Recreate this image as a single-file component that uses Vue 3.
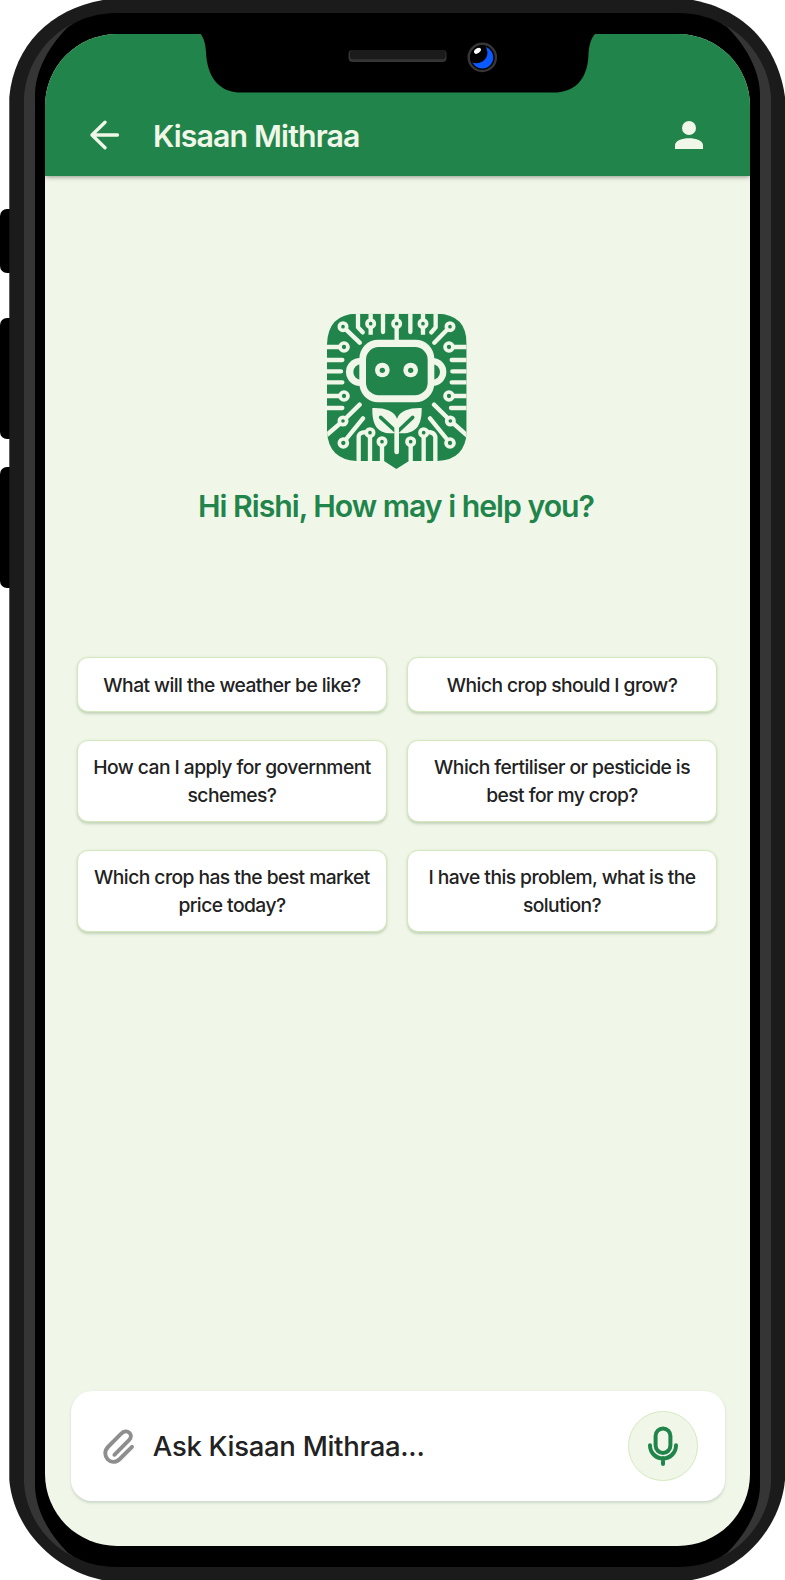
<script setup>
const questions = [
  'What will the weather be like?',
  'Which crop should I grow?',
  'How can I apply for government schemes?',
  'Which fertiliser or pesticide is best for my crop?',
  'Which crop has the best market price today?',
  'I have this problem, what is the solution?',
]
</script>

<template>
  <div class="stage">
    <!-- device body and side buttons -->
    <svg class="overlay" width="785" height="1580" viewBox="0 0 785 1580" aria-hidden="true">
      <rect x="0" y="209" width="24" height="64" rx="7" fill="#000" />
      <rect x="0" y="318" width="24" height="121" rx="7" fill="#000" />
      <rect x="0" y="467" width="24" height="121" rx="7" fill="#000" />
      <path d="M9.300 97C14 46 50 9 103 0H693C745 10 778 46 785 97V1480C781 1524 747 1569 692 1580H102C48 1568 13 1524 9.300 1480Z" fill="#1b1b1b" />
      <path d="M24 97C26 65 46 37 72 24H723C749 37 769 65 771 97V1483C769 1515 749 1543 723 1556H72C46 1543 26 1515 24 1483Z" fill="#353535" />
      <path d="M35 95C35 75 45 50 68 27 82 18 97 13 118 13H677C698 13 713 18 727 27 750 50 760 75 760 95V1485C760 1505 750 1530 727 1553 713 1562 698 1567 677 1567H118C97 1567 82 1562 68 1553 45 1530 35 1505 35 1485Z" fill="#000" />
    </svg>

    <div class="screen">
      <header class="bar">
        <svg class="back" width="30" height="30" viewBox="0 0 30 30">
          <path d="M15 2.200 2 15 15 27.800M2.500 15h25" />
        </svg>
        <h1 class="title">Kisaan Mithraa</h1>
        <svg class="user" width="28" height="28" viewBox="0 0 28 28">
          <circle cx="14" cy="7" r="7" />
          <path d="M0 28v-3.500C0 19.500 7 17.300 14 17.300s14 2.200 14 7.200V28z" />
        </svg>
      </header>

      <section class="hero">
        <svg class="logo" width="170" height="180" viewBox="0 0 510 540">
          <defs>
            <clipPath id="badge"><path d="M139 41H382Q470 43 470 132V396Q466 480 382 483H297L259 507 222 483H139Q56 478 51 396V132Q54 43 139 41Z" /></clipPath>
          </defs>
          <g clip-path="url(#badge)">
            <rect x="45" y="35" width="430" height="480" class="leaf-bg" />
            <g class="trace">
              <path d="M99 80 149 128M144 36V82L158 97M182 70V36M219 36V96M260 70V124M260 36V70M301 36V96M339 70V36M377 36V82L364 97M420 80 373 128" />
              <path class="stub" d="M182 80V104M339 80V104" />
              <path d="M45 141H102M45 180H97M45 214H93M45 247H97M45 288H102M45 324H97M475 141H417M475 180H425M475 214H427M475 247H425M475 288H417M475 324H423" />
              <path d="M149 314 99 363 50 405M159 355 99 429M372 314 422 363 470 405M360 355 420 429" />
              <path d="M146 490V408Q150 394 179 397M180 397V490M216 425V490M302 425V490M341 397V490M342 397Q371 392 376 410V490" />
            </g>
            <g class="node">
              <circle cx="99" cy="80" r="11" /><circle cx="182" cy="71" r="11" /><circle cx="260" cy="71" r="11" />
              <circle cx="339" cy="71" r="11" /><circle cx="420" cy="80" r="11" /><circle cx="102" cy="141" r="12" />
              <circle cx="417" cy="141" r="12" /><circle cx="102" cy="288" r="12" /><circle cx="417" cy="288" r="12" />
              <circle cx="99" cy="363" r="11" /><circle cx="421" cy="363" r="11" /><circle cx="100" cy="429" r="12" />
              <circle cx="420" cy="429" r="12" /><circle cx="180" cy="398" r="11" /><circle cx="341" cy="398" r="11" />
              <circle cx="216" cy="425" r="11" /><circle cx="302" cy="425" r="11" />
            </g>
            <circle cx="150" cy="216" r="42" class="cream" />
            <circle cx="367" cy="216" r="42" class="cream" />
            <circle cx="153" cy="216" r="23" class="leaf-bg" />
            <circle cx="367" cy="216" r="23" class="leaf-bg" />
            <rect x="148" y="119" width="225" height="188" rx="57" class="cream" />
            <rect x="168" y="141" width="185" height="145" rx="38" class="leaf-bg" />
            <circle cx="217" cy="210" r="22" class="cream" /><circle cx="302" cy="210" r="22" class="cream" />
            <circle cx="217" cy="211" r="8" class="leaf-bg" /><circle cx="302" cy="211" r="8" class="leaf-bg" />
            <path class="cream" d="M187 324C225 323 252 332 261 356 270 332 298 323 335 324 336 371 322 402 272 400H248C199 402 186 371 187 324Z" />
            <path class="vein" d="M212 352 256 393M308 352 265 393" />
            <path class="stem" d="M260 374V456" />
          </g>
        </svg>
        <h2 class="greeting">Hi Rishi, How may i help you?</h2>
      </section>

      <div class="grid">
        <button v-for="q in questions" :key="q" class="card">{{ q }}</button>
      </div>

      <div class="ask">
        <svg class="clip" width="34" height="36" viewBox="0 0 34 36">
          <path d="M12.400 26.800 27 12.200C32.600 6.300 24.800.100 19.200 5.700L6.400 18.500C-2.400 27.300 9.300 39.500 17.800 31L30 18.800" />
        </svg>
        <span class="placeholder">Ask Kisaan Mithraa...</span>
        <button class="mic">
          <svg width="32" height="40" viewBox="0 0 32 40">
            <rect x="8.600" y="2.400" width="14.800" height="24.500" rx="7.400" />
            <path d="M3 19.300C3 27 9 32.500 16 32.500s13-5.500 13-13.200M16 32v6" />
          </svg>
        </button>
      </div>
    </div>

    <!-- notch, speaker and camera -->
    <svg class="overlay" width="785" height="110" viewBox="0 0 785 110" aria-hidden="true">
      <defs>
        <clipPath id="lens"><circle cx="482.300" cy="57.300" r="12" /></clipPath>
      </defs>
      <path d="M198 33H200C204 38 205.500 44 206 52 207 76 218 91 238 92.500H557C577 91 588 77 588.500 54 589 46 591 38 595 34V33Z" fill="#000" />
      <rect x="348.500" y="50" width="98" height="12" rx="4" fill="#353535" />
      <rect x="350" y="50" width="95.500" height="9.300" rx="3" fill="#1b1b1b" />
      <g clip-path="url(#lens)">
        <circle cx="482.300" cy="57.500" r="10.900" fill="#0a5bff" />
        <circle cx="476.600" cy="52.400" r="10.800" fill="#000" />
        <ellipse cx="477.500" cy="50.800" rx="3.800" ry="2.400" fill="#fff" transform="rotate(-35 477.500 50.800)" />
      </g>
      <circle cx="482.300" cy="57.400" r="13.600" fill="none" stroke="#363636" stroke-width="2.400" />
    </svg>
  </div>
</template>

<style>
body {
  margin: 0;
  background: #fff;
}
</style>

<style scoped>
.stage {
  position: relative;
  width: 785px;
  height: 1580px;
  overflow: hidden;
  box-sizing: border-box;
  padding: 34px 0 0 45px;
  font-family: Inter, 'Liberation Sans', sans-serif;
}
.overlay {
  position: absolute;
  top: 0;
  left: 0;
}
.screen {
  position: relative;
  display: flex;
  flex-direction: column;
  width: 705px;
  height: 1512px;
  border-radius: 72px;
  overflow: hidden;
  background: #f1f7e8;
}
.bar {
  display: flex;
  align-items: center;
  flex: none;
  height: 142px;
  box-sizing: border-box;
  padding: 60px 47px 0 45px;
  background: #21854b;
  box-shadow: 0 1.400px 5.500px rgba(0, 0, 0, 0.5);
}
.back {
  fill: none;
  stroke: #f1f7e8;
  stroke-width: 3.300;
  stroke-linecap: round;
  stroke-linejoin: round;
}
.user {
  margin-left: auto;
  fill: #f1f7e8;
}
.title {
  margin: 2px 0 0 33px;
  font-size: 30.250px;
  line-height: 42px;
  font-weight: 600;
  letter-spacing: -0.850px;
  color: #f1f7e8;
}
.hero {
  display: flex;
  flex-direction: column;
  align-items: center;
  padding-top: 124px;
}
.logo {
  margin-right: 5px;
}
.greeting {
  margin: 5px 3px 0 0;
  font-size: 30.250px;
  line-height: 42px;
  font-weight: 600;
  letter-spacing: -1.020px;
  color: #21854b;
}
.leaf-bg {
  fill: #21854b;
}
.cream {
  fill: #f1f7e8;
}
.trace {
  fill: none;
  stroke: #f1f7e8;
  stroke-width: 13;
  stroke-linecap: round;
  stroke-linejoin: round;
}
.stub {
  stroke-linecap: butt;
}
.node {
  fill: #21854b;
  stroke: #f1f7e8;
  stroke-width: 11;
}
.vein,
.stem {
  fill: none;
  stroke: #21854b;
  stroke-width: 11;
  stroke-linecap: round;
}
.stem {
  stroke: #f1f7e8;
  stroke-width: 14;
}
.grid {
  display: grid;
  grid-template-columns: 309.500px 309.500px;
  justify-content: center;
  gap: 27.500px 20.600px;
  margin: 130.400px 1px 0 0;
}
.card {
  box-sizing: border-box;
  padding: 13.200px 12px 12.300px;
  border: 1px solid #d3e9bd;
  border-radius: 11px;
  background: #fff;
  box-shadow: 0 1.400px 2.800px rgba(60, 110, 50, 0.26);
  font: 450 19.250px/27.500px Inter, 'Liberation Sans', sans-serif;
  letter-spacing: -0.550px;
  color: #222;
}
.ask {
  display: flex;
  align-items: center;
  box-sizing: border-box;
  width: 654px;
  height: 110px;
  margin: auto 25.200px 45px auto;
  padding: 0 27px 0 31px;
  border-radius: 21px;
  background: #fff;
  box-shadow: 0 1.400px 2.800px rgba(60, 90, 90, 0.2);
}
.clip {
  fill: none;
  stroke: #8e8e8e;
  stroke-width: 3.900;
  stroke-linecap: round;
}
.placeholder {
  margin-left: 17px;
  font-size: 27.500px;
  font-weight: 450;
  letter-spacing: -0.290px;
  color: #222;
}
.mic {
  display: flex;
  align-items: center;
  justify-content: center;
  box-sizing: border-box;
  width: 69.500px;
  height: 69.500px;
  margin-left: auto;
  padding: 0;
  border: 1px solid #d3e9bd;
  border-radius: 50%;
  background: #f1f7e8;
}
.mic svg {
  fill: none;
  stroke: #21854b;
  stroke-width: 4;
  stroke-linecap: round;
}
</style>
